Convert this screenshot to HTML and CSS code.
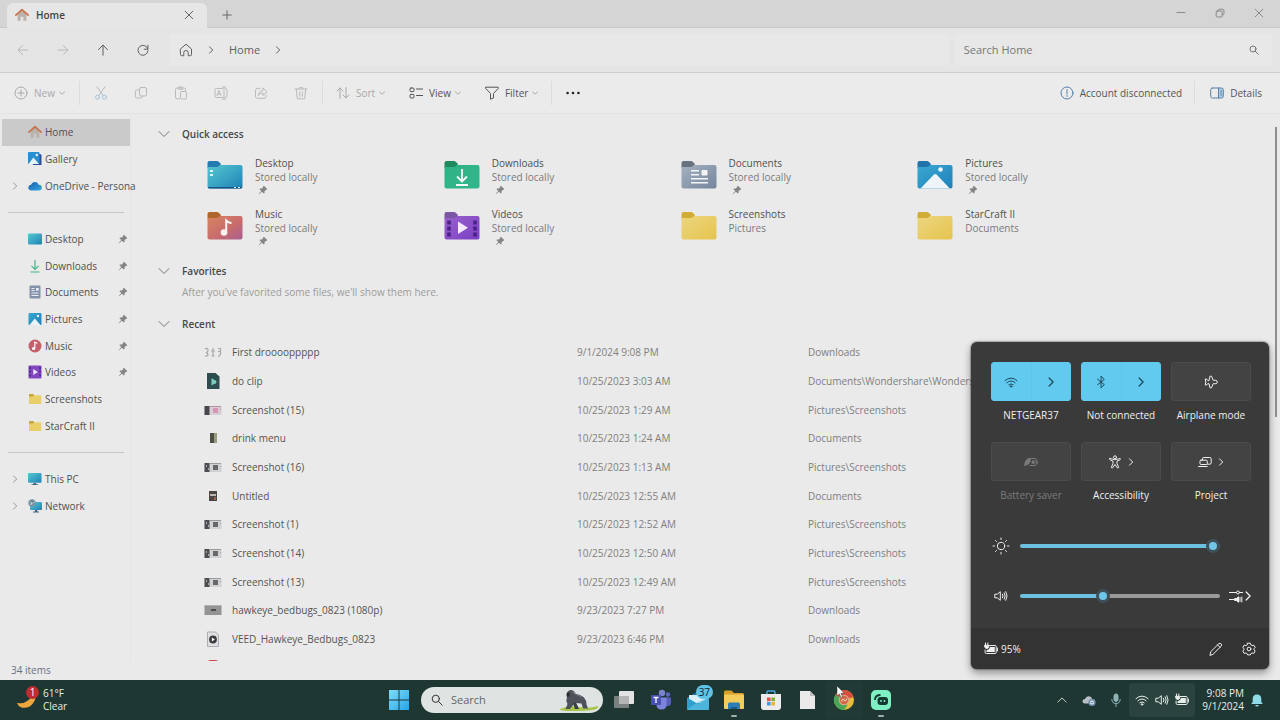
FILE: index.html
```html
<!DOCTYPE html>
<html lang="en">
<head>
<meta charset="utf-8">
<meta name="viewport" content="width=device-width, initial-scale=1">
<title>Home - File Explorer</title>
<link rel="stylesheet" href="styles.css">
</head>
<body>
<svg class="sprite" aria-hidden="true">
  <defs>
    <linearGradient id="g-desk" x1="0" y1="0" x2="1" y2="1"><stop offset="0" stop-color="#57c6cf"/><stop offset=".5" stop-color="#3aa6c4"/><stop offset="1" stop-color="#1f7fb5"/></linearGradient>
    <linearGradient id="g-down" x1="0" y1="0" x2="1" y2="1"><stop offset="0" stop-color="#2fb385"/><stop offset="1" stop-color="#31b58c"/></linearGradient>
    <linearGradient id="g-docs" x1="0" y1="0" x2="1" y2="1"><stop offset="0" stop-color="#a5b2c2"/><stop offset="1" stop-color="#74859b"/></linearGradient>
    <linearGradient id="g-pics" x1="0" y1="0" x2="1" y2="1"><stop offset="0" stop-color="#3aa9d2"/><stop offset="1" stop-color="#1f7fba"/></linearGradient>
    <linearGradient id="g-music" x1="0" y1="0" x2="1" y2="1"><stop offset="0" stop-color="#d88560"/><stop offset=".6" stop-color="#c76a6d"/><stop offset="1" stop-color="#a95f92"/></linearGradient>
    <linearGradient id="g-video" x1="0" y1="0" x2="1" y2="1"><stop offset="0" stop-color="#9a62cc"/><stop offset="1" stop-color="#7b3fc4"/></linearGradient>
    <linearGradient id="g-fold" x1="0" y1="0" x2="1" y2="1"><stop offset="0" stop-color="#ecd57f"/><stop offset="1" stop-color="#e5c44e"/></linearGradient>
    <linearGradient id="g-win" x1="0" y1="0" x2="1" y2="1"><stop offset="0" stop-color="#7fdcf8"/><stop offset="1" stop-color="#26a5e6"/></linearGradient>
    <linearGradient id="g-cloud" x1="0" y1="0" x2="1" y2="1"><stop offset="0" stop-color="#1660ac"/><stop offset="1" stop-color="#35a4e4"/></linearGradient>
  </defs>
  <symbol id="house" viewBox="0 0 16 16"><path d="M3 7v7.5h3.4V10h3.2v4.5H13V7L8 3z" fill="#b9b2ad"/><path d="M1 8.2 8 2l7 6.2" fill="none" stroke="#c9744f" stroke-width="2" stroke-linecap="round" stroke-linejoin="round"/></symbol>
  <symbol id="close" viewBox="0 0 10 10"><path d="m1.2 1.2 7.6 7.6m0-7.6L1.2 8.8"/></symbol>
  <symbol id="plus" viewBox="0 0 10 10"><path d="M5 .8v8.4M.8 5h8.4"/></symbol>
  <symbol id="minimize" viewBox="0 0 10 10"><path d="M1 4.500h8"/></symbol>
  <symbol id="restore" viewBox="0 0 10 10"><rect x="1.2" y="3" width="6" height="6" rx="1"/><path d="M3 2.600q0-1.400 1.400-1.400H7.200Q9 1.200 9 3v2.600q0 1.400-1.400 1.400"/></symbol>
  <symbol id="left" viewBox="0 0 12 12"><path d="M11 6H1.200M5.500 1.500 1 6l4.500 4.500"/></symbol>
  <symbol id="right" viewBox="0 0 12 12"><path d="M1 6h9.800M6.500 1.500 11 6l-4.500 4.500"/></symbol>
  <symbol id="up" viewBox="0 0 12 12"><path d="M6 11.200V1.200M1.500 5.700 6 1l4.500 4.700"/></symbol>
  <symbol id="refresh" viewBox="0 0 12 12"><path d="M10.900 5.200A5 5 0 1 0 11 6.800M10.900 1.200v4H7.200"/></symbol>
  <symbol id="home-line" viewBox="0 0 14 14"><path d="M1.500 6 7 1.200 12.500 6v5.700q0 1-1 1H9.200V9.500Q9.200 7.500 7 7.500T4.800 9.500v3.200H2.500q-1 0-1-1z"/></symbol>
  <symbol id="chev-r" viewBox="0 0 8 8"><path d="M2.500.8 5.700 4 2.500 7.200"/></symbol>
  <symbol id="chev-d" viewBox="0 0 8 8"><path d="M1.500 3 4 5.200l2.500-2.200"/></symbol>
  <symbol id="chev-wide" viewBox="0 0 12 12"><path d="M1 3.500 6 8.500l5-5"/></symbol>
  <symbol id="search" viewBox="0 0 12 12"><circle cx="4.800" cy="4.800" r="3.600"/><path d="m7.500 7.500 3.700 3.700"/></symbol>
  <symbol id="add-circle" viewBox="0 0 14 14"><circle cx="7" cy="7" r="6"/><path d="M7 4v6M4 7h6"/></symbol>
  <symbol id="cut" viewBox="0 0 14 14"><path d="M3 .8 9.300 9.700M11 .8 4.700 9.700"/><g stroke="#a3c3dc"><circle cx="3.500" cy="11.200" r="2"/><circle cx="10.500" cy="11.200" r="2"/></g></symbol>
  <symbol id="copy" viewBox="0 0 14 14"><rect x="5.500" y="1.500" width="7" height="8.500" rx="1.500"/><path d="M5.300 4H2.800Q1.300 4 1.300 5.500v5Q1.300 12 2.800 12h4Q8.300 12 8.500 10.200"/></symbol>
  <symbol id="paste" viewBox="0 0 14 14"><path d="M5.500 12.700H3q-1.500 0-1.500-1.500V3.500Q1.500 2 3 2h7q1.500 0 1.500 1.500V5"/><rect x="4.300" y="1" width="4.500" height="2.400" rx="1"/><rect x="6.500" y="5.500" width="6" height="7.500" rx="1.300"/></symbol>
  <symbol id="rename" viewBox="0 0 14 14"><path d="M8.500 2.500H2.500Q1 2.500 1 4v6q0 1.500 1.500 1.500h6M11.500 2.500q1.500 0 1.500 1.500v6q0 1.500-1.500 1.500M10 1v12M8.500 1h3M8.500 13h3M3 9.500 5 4.500l2 5M3.700 8h2.600"/></symbol>
  <symbol id="share" viewBox="0 0 14 14"><path d="M6 2.300H3.500Q1.500 2.300 1.500 4.300v6q0 2 2 2h6.500q2 0 2-2V9.500"/><path d="M4.500 9Q5 4.800 9 4.600V2l4 3.800-4 3.800V7Q6 6.800 4.500 9z"/></symbol>
  <symbol id="trash" viewBox="0 0 14 14"><path d="M1 3h12M5 2.800Q5 1.200 7 1.200T9 2.800M2.300 3l1 9.800h7.400l1-9.800M5.700 5.800v4.500M8.300 5.800v4.500"/></symbol>
  <symbol id="sort" viewBox="0 0 14 14"><path d="M4 12.500V2M1 5l3-3 3 3M10 1.500V12M7 9l3 3 3-3"/></symbol>
  <symbol id="view" viewBox="0 0 14 14"><rect x="1" y="2" width="4" height="3.600" rx="1"/><rect x="1" y="8.400" width="4" height="3.600" rx="1"/><path d="M7.500 3H14M7.500 9.500H14"/></symbol>
  <symbol id="filter" viewBox="0 0 14 14"><path d="M.8 1.200h12.400v1.300L8.500 7.500V12l-3 1.200V7.500L.8 2.500z"/></symbol>
  <symbol id="dots" viewBox="0 0 14 14"><g fill="#222" stroke="none"><circle cx="1.600" cy="7" r="1.300"/><circle cx="7" cy="7" r="1.300"/><circle cx="12.400" cy="7" r="1.300"/></g></symbol>
  <symbol id="info" viewBox="0 0 14 14"><circle cx="7" cy="7" r="6"/><path d="M7 3.700v4M7 9.200v1.200"/></symbol>
  <symbol id="details" viewBox="0 0 14 14"><path d="M8.500 2h3q1.800 0 1.800 1.800v6.400q0 1.800-1.800 1.800h-3z" fill="#b3cde6" stroke="none"/><rect x=".7" y="2" width="12.600" height="10" rx="1.800"/><path d="M8.500 2v10M10.500 5h1M10.500 7h1M10.500 9h1"/></symbol>
  <symbol id="pin" viewBox="0 0 10 10"><path d="M5.900.8 9.200 4.100 8.400 4.900 7.800 4.900 6.600 6.200 6.500 8.100 5.800 8.500 3.900 6.700 1 9.300.7 9 3.300 6.100 1.500 4.200 1.900 3.500 3.800 3.400 5.100 2.200 5.100 1.600z" fill="#858585"/></symbol>

  <symbol id="s-gallery" viewBox="0 0 14 14"><path d="M3 2h9q1.500 0 1.500 1.500V13H5z" fill="#2a4f96"/><rect x="0" y="0" width="11.500" height="12" rx="1" fill="#2a8fcf"/><path d="M.6 12 5.300 5.500 11 12z" fill="#e6f1f8"/><circle cx="8.800" cy="3" r="1.200" fill="#e6f1f8"/></symbol>
  <symbol id="s-onedrive" viewBox="0 0 14 14"><path d="M3.300 11.500Q.3 11.300.3 8.600 .4 6 3 5.800 4.200 2.800 7.200 2.900q2.600.1 3.500 2.900Q13.700 6 13.800 8.700q-.1 2.700-3 2.800z" fill="url(#g-cloud)"/></symbol>
  <symbol id="s-desktop" viewBox="0 0 14 14"><rect y="1.500" width="14" height="11" rx="1" fill="url(#g-desk)"/></symbol>
  <symbol id="s-download" viewBox="0 0 14 14"><path d="M7 1v9M3.500 6.800 7 10.300l3.500-3.500M2.500 13h9" fill="none" stroke="#43b487" stroke-width="1.200"/></symbol>
  <symbol id="s-document" viewBox="0 0 14 14"><rect x="1.500" y=".5" width="11" height="13" rx="1" fill="#8492ac"/><path d="M3.500 3.500h3M3.500 5.500h3M3.500 8h7M3.500 10.500h7" stroke="#e9edf3"/><rect x="8" y="3" width="2.700" height="2.700" fill="#e9edf3"/></symbol>
  <symbol id="s-picture" viewBox="0 0 14 14"><rect x=".5" y="1" width="13" height="12" rx="1" fill="url(#g-pics)"/><path d="M1.500 13 6.800 6.500 12.500 13z" fill="#eaf3f8"/><circle cx="10" cy="4" r="1.200" fill="#eaf3f8"/></symbol>
  <symbol id="s-music" viewBox="0 0 14 14"><circle cx="7" cy="7" r="6.500" fill="#c4606a"/><path d="M6.800 9.500V3.200L9.500 4.200" fill="none" stroke="#fff" stroke-width="1.200"/><circle cx="5.600" cy="9.500" r="1.600" fill="#fff"/></symbol>
  <symbol id="s-video" viewBox="0 0 14 14"><rect x=".5" y=".5" width="13" height="13" rx="1" fill="#8147bf"/><path d="M2 2v10M12 2v10" stroke="#4a2380" stroke-width="1.500" stroke-dasharray="2 1.600"/><path d="m5.300 4 4.500 3-4.500 3z" fill="#f0e6f8"/></symbol>
  <symbol id="s-folder" viewBox="0 0 14 14"><path d="M1 3q0-1 1-1h3l1.200 1.200H12.500q.8 0 .8.800V12H1z" fill="#e8cf6a"/><path d="M1 3q0-1 1-1h3l1.200 1.200L5 4.400H1z" fill="#c4a43b"/></symbol>
  <symbol id="s-pc" viewBox="0 0 14 14"><rect y="1" width="13.500" height="9.800" rx="1" fill="url(#g-desk)"/><path d="M5.500 11h2.600v1.200H10V13H3.500v-.8h2z" fill="#42617a"/></symbol>
  <symbol id="s-network" viewBox="0 0 14 14"><rect x="2" y="3" width="12" height="8" rx="1" fill="url(#g-desk)"/><path d="M7 11h2.200v1.500H11V13.500H5v-1h2z" fill="#42617a"/><circle cx="4" cy="4" r="3.700" fill="#7895a6"/><path d="M2 2.500 4 4l2.500-1M2.500 6 4 4" stroke="#d5e5ec" stroke-width=".9"/></symbol>

  <symbol id="f-desktop" viewBox="0 0 36 30"><path d="M.5 3q0-2 2-2H10q1 0 2 1l2 2-2 4H.5z" fill="#2479ae"/><path d="M.5 7h9q1.500 0 2.500-1l1-1h20.500q2 0 2 2v19.500q0 2-2 2h-31q-2 0-2-2z" fill="url(#g-desk)"/><path d="M.8 27h34.600q-.5 1.500-2 1.500h-31q-1.400 0-1.600-1.500z" fill="#175384"/><path d="M3 10h3v2H3zM3 14h3v2H3zM27 27h2v1h-2zM31 27h2v1h-2z" fill="#d7f4f8"/></symbol>
  <symbol id="f-download" viewBox="0 0 36 30"><path d="M.5 3q0-2 2-2H10q1 0 2 1l2 2-2 4H.5z" fill="#1f8a60"/><path d="M.5 7h9q1.500 0 2.500-1l1-1h20.500q2 0 2 2v19.500q0 2-2 2h-31q-2 0-2-2z" fill="url(#g-down)"/><path d="M18 9v12M13 16.500l5 5 5-5M12 25h12" fill="none" stroke="#f4fbf8" stroke-width="1.800"/></symbol>
  <symbol id="f-document" viewBox="0 0 36 30"><path d="M.5 3q0-2 2-2H10q1 0 2 1l2 2-2 4H.5z" fill="#66737f"/><path d="M.5 7h9q1.500 0 2.500-1l1-1h20.500q2 0 2 2v19.500q0 2-2 2h-31q-2 0-2-2z" fill="url(#g-docs)"/><path d="M10 10.700h8M10 14.700h8M10 18.800h17M10 22.800h17" stroke="#f3f5f7" stroke-width="1.500"/><rect x="20.500" y="10" width="6" height="5.500" rx="1" fill="#f3f5f7"/></symbol>
  <symbol id="f-picture" viewBox="0 0 36 30"><path d="M.5 3q0-2 2-2H10q1 0 2 1l2 2-2 4H.5z" fill="#2272ac"/><path d="M.5 7h9q1.500 0 2.500-1l1-1h20.500q2 0 2 2v19.500q0 2-2 2h-31q-2 0-2-2z" fill="url(#g-pics)"/><path d="M3.500 28.500 17 14.500q1.300-1.200 2.600 0l13.200 14z" fill="#eef4f9"/><circle cx="23.500" cy="9.500" r="2.300" fill="#eef4f9"/></symbol>
  <symbol id="f-music" viewBox="0 0 36 30"><path d="M.5 3q0-2 2-2H10q1 0 2 1l2 2-2 4H.5z" fill="#b0672d"/><path d="M.5 7h9q1.500 0 2.500-1l1-1h20.500q2 0 2 2v19.500q0 2-2 2h-31q-2 0-2-2z" fill="url(#g-music)"/><path d="M19.200 22V9.500q2.500 2.800 5.300 2.300" fill="none" stroke="#fbf3f1" stroke-width="2"/><circle cx="17" cy="21.500" r="3.300" fill="#fbf3f1"/></symbol>
  <symbol id="f-video" viewBox="0 0 36 30"><path d="M.5 3q0-2 2-2H10q1 0 2 1l2 2-2 4H.5z" fill="#7b57a3"/><path d="M.5 7h9q1.500 0 2.500-1l1-1h20.500q2 0 2 2v19.500q0 2-2 2h-31q-2 0-2-2z" fill="url(#g-video)"/><path d="M5 9.500v18M31 9.500v18" stroke="#4b2188" stroke-width="3.600" stroke-dasharray="4 2"/><path d="M14 10.500v12.500l10-6.200z" fill="#f3e9fb"/></symbol>
  <symbol id="f-plain" viewBox="0 0 36 30"><path d="M.5 3q0-2 2-2H10q1 0 2 1l2 2-2 4H.5z" fill="#d2ad36"/><path d="M.5 7h9q1.500 0 2.500-1l1-1h20.500q2 0 2 2v19.500q0 2-2 2h-31q-2 0-2-2z" fill="url(#g-fold)"/></symbol>

  <symbol id="t-drops" viewBox="0 0 18 16"><g fill="none" stroke="#a6a6a6" stroke-width="1.200"><path d="M1 5q3-1.500 3 1T2 8.500q2 1 2 2.500t-3 1M14 4.500h2.500M14 7.500q3-1 2.500 2T14 12M16.500 4.500v4"/><path d="M9 4v8M7 7h4M7.500 12h3"/></g></symbol>
  <symbol id="t-clip" viewBox="0 0 18 16"><path d="M3 0h8.500L15.500 3.500V16H3z" fill="#2f4d50"/><path d="M7.500 5.500q2-.5 2.500 1.500 2.500 0 2.500 2t-2.500 2L7.500 12.500z" fill="#7fcdbf"/></symbol>
  <symbol id="t-shot-pink" viewBox="0 0 18 16"><rect x=".5" y="4" width="17" height="9" fill="#d5d0d5"/><rect x=".5" y="4" width="5" height="9" fill="#4a464d"/><rect x="9" y="6" width="5" height="5" fill="#d995b5"/><path d="M6 4h11v1H6zM16 7h1v1h-1z" fill="#b58fa0"/></symbol>
  <symbol id="t-menu" viewBox="0 0 18 16"><rect x="6" y="3" width="7" height="10" fill="#9a9a80"/><rect x="6" y="3" width="4" height="10" fill="#4e5046"/></symbol>
  <symbol id="t-shot" viewBox="0 0 18 16"><rect x=".5" y="4" width="17" height="9" fill="#d0d2d4"/><rect x=".5" y="4" width="5" height="9" fill="#4c4e51"/><rect x="9" y="6" width="5" height="5" fill="#66686b"/><path d="M6 4h11v1H6zM16 7h1v1h-1z" fill="#9a9ca0"/><path d="M2 6h1v2H2zM4 9h1v2H4z" fill="#aaa"/></symbol>
  <symbol id="t-untitled" viewBox="0 0 18 16"><rect x="5" y="3" width="8" height="10" fill="#4d4544"/><rect x="6" y="6" width="6" height="2" fill="#bdb5b0"/><rect x="10" y="9" width="2" height="3" fill="#a2604a"/></symbol>
  <symbol id="t-hawk" viewBox="0 0 18 16"><rect x=".5" y="3" width="17" height="10" fill="#949494"/><rect x="7" y="7" width="5" height="2" fill="#4d4d4d"/><path d="M.5 3.500h17" stroke="#b3b3b3"/></symbol>
  <symbol id="t-media" viewBox="0 0 18 16"><path d="M3.500 1h8L14.500 4v11.500h-11z" fill="#e0e0e2" stroke="#adadb3"/><circle cx="9" cy="8.500" r="3.900" fill="#3b3b40"/><path d="m7.900 6.500 3 2-3 2z" fill="#fff"/></symbol>
  <symbol id="t-red" viewBox="0 0 18 16"><rect x="3" width="12" height="16" rx="4" fill="#d0454c"/></symbol>

  <symbol id="wifi" viewBox="0 0 14 14"><path d="M1 5.600q6-5.200 12 0M2.900 7.700q4.100-3.600 8.200 0M4.800 9.700q2.200-1.800 4.400 0"/><circle cx="7" cy="11.400" r=".8"/></symbol>
  <symbol id="bluetooth" viewBox="0 0 14 14"><path d="M3.500 4.200 10.300 9.600 7 12.800V1.200l3.300 3.200L3.500 9.800"/></symbol>
  <symbol id="plane" viewBox="0 0 14 14"><path d="M5 5.300 6 1.200h1.500L9.200 5.300h2.600q1.500.3 1.500 1.700t-1.500 1.700H9.200L7.500 12.800H6L5 8.700H3.600L2.500 10H1.200l.6-3-.6-3h1.300l1.100 1.300z"/></symbol>
  <symbol id="saver" viewBox="0 0 14 14"><path d="M7 3.500h4q1.200 0 1.200 1.200v4.600q0 1.200-1.200 1.200H6M13.300 6v2.400"/><path d="M8 5.500h2.700v3.300H7.500z" fill="currentColor" stroke="none"/><path d="M.8 10.300Q.5 4.500 6 3q1.500 6.500-5.200 7.300z" fill="currentColor"/></symbol>
  <symbol id="access" viewBox="0 0 14 14"><circle cx="7" cy="2.300" r="1.500"/><path d="M1.800 3.600q-.5 1 .6 1.500L5 6v2.500L3.300 12.500q.7 1 1.500.2L7 9.500l2.200 3.200q.8.800 1.500-.2L9 8.500V6l2.600-.9q1.100-.5.600-1.500Q7 5.800 1.800 3.600z"/></symbol>
  <symbol id="project" viewBox="0 0 14 14"><path d="M4.500 5V3.800q0-1.300 1.300-1.300h6q1.400 0 1.400 1.300v4q0 1.400-1.400 1.400H9.500"/><rect x="2" y="5.200" width="7.300" height="4.300" rx="1"/><path d="M.5 11.500h8.700"/></symbol>
  <symbol id="sun" viewBox="0 0 18 18"><circle cx="9" cy="9" r="3.700"/><path d="M9 1v1.500M9 15.500V17M1 9h1.500M15.500 9H17M3.500 3.500l1 1M13.500 13.500l1 1M14.500 3.500l-1 1M4.500 13.500l-1 1"/></symbol>
  <symbol id="speaker" viewBox="0 0 14 14"><path d="M1.200 5.200h2.100l3-2.500v8.600l-3-2.500H1.200zM8.500 5.200q1.200 1.800 0 3.600M10.200 3.800q2.100 3.200 0 6.400M11.900 2.700q2.500 4.300 0 8.600" stroke-linejoin="round"/></symbol>
  <symbol id="mixer" viewBox="0 0 14 14"><path d="M0 3.500h7.300M10.600 3.500h3M0 10.500h5"/><circle cx="9" cy="3.500" r="1.500"/><path d="M6 9.500h1.500L9.500 7.700v5.600L7.500 11.500H6z" fill="currentColor"/><path d="M11 8.500v4M12.800 8v5"/></symbol>
  <symbol id="battery" viewBox="0 0 14 14"><path d="M5.500 3.500H11q1.200 0 1.200 1.200v5.600q0 1.200-1.200 1.200H2.300q-1.200 0-1.200-1.200V8M13.400 6v3"/><path d="M6 5h4.800v5H2.500V8.500L5 7z" fill="currentColor" stroke="none"/><path d="M1.500 1v2M3.800 1v2M.7 3.300h4v1.500q-.3 1.700-2 1.700t-2-1.700z" fill="currentColor"/></symbol>
  <symbol id="pencil" viewBox="0 0 14 14"><path d="m1 13 .8-3.400L9.800 1.700q1.200-1 2.300.2t.1 2.300l-8 7.900zM8.600 2.900l2.400 2.400"/></symbol>
  <symbol id="gear" viewBox="0 0 14 14"><path d="M5.600 1.200h2.800l.5 1.700 1.200.7 1.700-.5 1.400 2.400-1.200 1.200v1l1.200 1.300-1.400 2.400-1.700-.4-1.200.6-.5 1.300H5.600l-.5-1.300-1.200-.6-1.700.4L.8 9l1.200-1.300v-1L.8 5.500l1.400-2.400 1.700.5 1.200-.7z" stroke-linejoin="round"/><circle cx="7" cy="7" r="1.900"/></symbol>
  <symbol id="mic" viewBox="0 0 14 14"><rect x="5" y="1" width="4" height="7.500" rx="2" fill="#8fb4b6"/><path d="M2.800 6.500Q2.800 10.500 7 10.500t4.200-4M7 10.500V13.500"/></symbol>
  <symbol id="cloud-sync" viewBox="0 0 14 14"><path d="M3 10.500Q.3 10.300.5 7.800.8 6 3 6 4 3 7 3.200q2.500.2 3.200 2.800 2.800 0 3 2.400 0 2-2.200 2.100z" fill="#b9bfc4" stroke="none"/><circle cx="10" cy="9.500" r="3.600" fill="#6f8dab" stroke="none"/><path d="M8.300 8.800q1.700-2 3.400 0M11.700 10.300q-1.700 2-3.400 0" stroke="#fff"/></symbol>
  <symbol id="bell" viewBox="0 0 14 14"><path d="M2.700 6Q2.700 1.500 7 1.500T11.300 6v2.700L12.700 11H1.300l1.400-2.300zM5.200 12h3.600Q8.600 13.500 7 13.500T5.200 12z" fill="#8fdce8" stroke="none"/></symbol>

  <symbol id="b-win" viewBox="0 0 20 20"><path d="M0 0h9.500v9.500H0zM10.500 0H20v9.500h-9.500zM0 10.500h9.500V20H0zM10.500 10.500H20V20h-9.500z" fill="url(#g-win)"/></symbol>
  <symbol id="b-task" viewBox="0 0 22 22"><rect x="6" y="2" width="15" height="13" rx="1" fill="#e3e3e3"/><rect x="1" y="7" width="15" height="12" rx="1" fill="#858988" opacity=".9"/><rect x="6" y="7" width="10" height="8" fill="#b5b5b5"/></symbol>
  <symbol id="b-teams" viewBox="0 0 22 22"><circle cx="12" cy="4" r="3.200" fill="#7b83cf"/><circle cx="18" cy="5.500" r="2.200" fill="#5c66bd"/><path d="M15 8.500h6v5.500q0 3-3 3h-3z" fill="#5660b8"/><path d="M6.500 8.500h10v7q0 5-5 5t-5-5z" fill="#7b83dd"/><rect x="1" y="6" width="10" height="10" rx="1" fill="#4850b0"/><path d="M3.500 8.500h5M6 8.500v5.500" stroke="#fff" stroke-width="1.300"/></symbol>
  <symbol id="b-mail" viewBox="0 0 22 22"><path d="M0 9 11 2l11 7v11.500H0z" fill="#1876b4"/><path d="M2 6h18v8H2z" fill="#d9f0fa"/><path d="M0 8.500 11 15l11-6.500V20q0 1-1 1H1q-1 0-1-1z" fill="#2f9fd0"/><path d="M0 20.500 11 13 22 8.500V20q0 1-1 1H1z" fill="#62c4e4" opacity=".6"/></symbol>
  <symbol id="b-folder" viewBox="0 0 22 22"><path d="M1 3q0-1.500 1.500-1.500h6L11 4h8.500Q21 4 21 5.500V8H1z" fill="#d99f2a"/><rect x="1" y="5.500" width="20" height="14.500" rx="1" fill="#f3cd5c"/><path d="M5 20v-5q0-1.500 1.500-1.500h9Q17 13.500 17 15v5z" fill="#2a7db6"/><path d="M8 20v-2h6v2z" fill="#185a8c"/></symbol>
  <symbol id="b-store" viewBox="0 0 22 22"><path d="M7 6V3.200Q7 2 8.200 2h5.600Q15 2 15 3.200V6" fill="none" stroke="#44a7df" stroke-width="1.500"/><path d="M1 5h20v13q0 3-3 3H4q-3 0-3-3z" fill="#ececec"/><path d="M7 8.500h3.600v3.600H7z" fill="#df553e"/><path d="M11.400 8.500H15v3.600h-3.600z" fill="#7cae3f"/><path d="M7 12.900h3.600v3.600H7z" fill="#3f9bd7"/><path d="M11.400 12.900H15v3.600h-3.600z" fill="#e9b439"/></symbol>
  <symbol id="b-file" viewBox="0 0 22 22"><path d="M4 2h10l5 5v13H4z" fill="#eaeaea"/><path d="M14 2v5h5z" fill="#bcbcbc"/></symbol>
  <symbol id="b-chrome" viewBox="0 0 22 22"><circle cx="11" cy="11" r="10" fill="#e7bd3a"/><path d="M11 11 2.300 6A10 10 0 0 1 20.500 8z" fill="#d95040"/><path d="M11 11 2.300 6A10 10 0 0 0 11 21l3.500-5z" fill="#49a657"/><circle cx="11" cy="11" r="5.300" fill="#dfa98c"/><circle cx="11" cy="11" r="4.300" fill="#cf6947"/><path d="M8.500 12.500q1-4 2.500-1.500t2.700-1.500" stroke="#f3d9cb" fill="none"/></symbol>
  <symbol id="b-cam" viewBox="0 0 22 22"><rect x="1" y="1" width="20" height="20" rx="5" fill="#7ff0c4"/><path d="M5 11Q5 6 10.500 6" stroke="#163832" stroke-width="1.800" fill="none"/><rect x="7.500" y="8" width="10.500" height="8" rx="3" fill="#163832"/><path d="M11 11v2M14.500 11v2" stroke="#7ff0c4" stroke-width="1.400"/></symbol>
  <symbol id="b-moon" viewBox="0 0 22 22"><path d="M18.500 3Q21 10 16.500 15T5.500 18.500Q2 17.200.8 13.800 7 15.500 12 11.500T18.500 3z" fill="#eda63e"/></symbol>
  <symbol id="gorilla" viewBox="0 0 40 24"><path d="M1 21q9-4 19-2t19-1q1 3-6 4t-20 1-12-2z" fill="#a7c64a"/><path d="M8 4.500Q10.500 1 14 2.500q2 1 2.300 3.500Q22 6.500 25 9.500q3 3.500 2.500 7l1.500 4h-5l-1.500-5-5.500-.5-2.500 1.500L11 21H6.500l2-5Q6.500 12.500 8 9z" fill="#4e525b"/><path d="M17 14.500 20 21h-4l-2-5.500z" fill="#3a3d45"/><path d="M7.500 5.500Q9 4 11 5.500l-.5 3-2.800.3z" fill="#2c2e34"/><path d="M13 4q5 3 10 5" stroke="#777c87" fill="none"/></symbol>
</svg>

<div class="screen">
  <main class="explorer">
    <header class="titlebar">
      <div class="tab">
        <svg class="i14"><use href="#house"/></svg>
        <span class="tab-name">Home</span>
        <button class="bare" aria-label="Close tab"><svg class="line i10"><use href="#close"/></svg></button>
      </div>
      <button class="bare new-tab" aria-label="New tab"><svg class="line i10"><use href="#plus"/></svg></button>
      <div class="window-buttons">
        <button class="bare" aria-label="Minimize"><svg class="line i10"><use href="#minimize"/></svg></button>
        <button class="bare" aria-label="Restore"><svg class="line i10"><use href="#restore"/></svg></button>
        <button class="bare" aria-label="Close"><svg class="line i10"><use href="#close"/></svg></button>
      </div>
    </header>

    <nav class="navbar" aria-label="Navigation">
      <div class="nav-buttons">
        <button class="bare" aria-label="Back" disabled><svg class="line i12"><use href="#left"/></svg></button>
        <button class="bare" aria-label="Forward" disabled><svg class="line i12"><use href="#right"/></svg></button>
        <button class="bare" aria-label="Up"><svg class="line i12"><use href="#up"/></svg></button>
        <button class="bare" aria-label="Refresh"><svg class="line i12"><use href="#refresh"/></svg></button>
      </div>
      <div class="address">
        <svg class="line i14"><use href="#home-line"/></svg>
        <svg class="line i8"><use href="#chev-r"/></svg>
        <a class="crumb" href="#">Home</a>
        <svg class="line i8"><use href="#chev-r"/></svg>
      </div>
      <label class="find">
        <input type="search" placeholder="Search Home" aria-label="Search Home">
        <svg class="line i10"><use href="#search"/></svg>
      </label>
    </nav>

    <div class="toolbar" role="toolbar">
      <button class="tool first" disabled><svg class="line i14"><use href="#add-circle"/></svg>New<svg class="line i8"><use href="#chev-d"/></svg></button>
      <span class="rule"></span>
      <button class="tool square" aria-label="Cut" disabled><svg class="line i14"><use href="#cut"/></svg></button>
      <button class="tool square" aria-label="Copy" disabled><svg class="line i14"><use href="#copy"/></svg></button>
      <button class="tool square" aria-label="Paste" disabled><svg class="line i14"><use href="#paste"/></svg></button>
      <button class="tool square" aria-label="Rename" disabled><svg class="line i14"><use href="#rename"/></svg></button>
      <button class="tool square" aria-label="Share" disabled><svg class="line i14"><use href="#share"/></svg></button>
      <button class="tool square" aria-label="Delete" disabled><svg class="line i14"><use href="#trash"/></svg></button>
      <span class="rule"></span>
      <button class="tool" disabled><svg class="line i14"><use href="#sort"/></svg>Sort<svg class="line i8"><use href="#chev-d"/></svg></button>
      <button class="tool"><svg class="line i14"><use href="#view"/></svg>View<svg class="line i8"><use href="#chev-d"/></svg></button>
      <button class="tool"><svg class="line i14"><use href="#filter"/></svg>Filter<svg class="line i8"><use href="#chev-d"/></svg></button>
      <span class="rule"></span>
      <button class="tool square" aria-label="See more"><svg class="i14"><use href="#dots"/></svg></button>
      <button class="tool account"><svg class="line i14 blue"><use href="#info"/></svg>Account disconnected</button>
      <span class="rule"></span>
      <button class="tool details"><svg class="line i14 blue"><use href="#details"/></svg>Details</button>
    </div>

    <div class="body">
      <aside class="sidebar">
        <ul class="tree">
          <li class="node selected"><svg class="i14"><use href="#house"/></svg><a href="#">Home</a></li>
          <li class="node"><svg class="i14"><use href="#s-gallery"/></svg><a href="#">Gallery</a></li>
          <li class="node"><svg class="line i8 twist"><use href="#chev-r"/></svg><svg class="i14"><use href="#s-onedrive"/></svg><a href="#">OneDrive - Persona</a></li>
          <li class="split"></li>
          <li class="node"><svg class="i14"><use href="#s-desktop"/></svg><a href="#">Desktop</a><svg class="i10"><use href="#pin"/></svg></li>
          <li class="node"><svg class="i14"><use href="#s-download"/></svg><a href="#">Downloads</a><svg class="i10"><use href="#pin"/></svg></li>
          <li class="node"><svg class="i14"><use href="#s-document"/></svg><a href="#">Documents</a><svg class="i10"><use href="#pin"/></svg></li>
          <li class="node"><svg class="i14"><use href="#s-picture"/></svg><a href="#">Pictures</a><svg class="i10"><use href="#pin"/></svg></li>
          <li class="node"><svg class="i14"><use href="#s-music"/></svg><a href="#">Music</a><svg class="i10"><use href="#pin"/></svg></li>
          <li class="node"><svg class="i14"><use href="#s-video"/></svg><a href="#">Videos</a><svg class="i10"><use href="#pin"/></svg></li>
          <li class="node"><svg class="i14"><use href="#s-folder"/></svg><a href="#">Screenshots</a></li>
          <li class="node"><svg class="i14"><use href="#s-folder"/></svg><a href="#">StarCraft II</a></li>
          <li class="split"></li>
          <li class="node"><svg class="line i8 twist"><use href="#chev-r"/></svg><svg class="i14"><use href="#s-pc"/></svg><a href="#">This PC</a></li>
          <li class="node"><svg class="line i8 twist"><use href="#chev-r"/></svg><svg class="i14"><use href="#s-network"/></svg><a href="#">Network</a></li>
        </ul>
      </aside>

      <section class="content">
        <h2 class="heading"><svg class="line i12"><use href="#chev-wide"/></svg>Quick access</h2>
        <div class="tiles">
          <article class="tile"><svg class="folder"><use href="#f-desktop"/></svg><div><p class="tile-name">Desktop</p><p class="tile-sub">Stored locally</p><svg class="i10 tile-pin"><use href="#pin"/></svg></div></article>
          <article class="tile"><svg class="folder"><use href="#f-download"/></svg><div><p class="tile-name">Downloads</p><p class="tile-sub">Stored locally</p><svg class="i10 tile-pin"><use href="#pin"/></svg></div></article>
          <article class="tile"><svg class="folder"><use href="#f-document"/></svg><div><p class="tile-name">Documents</p><p class="tile-sub">Stored locally</p><svg class="i10 tile-pin"><use href="#pin"/></svg></div></article>
          <article class="tile"><svg class="folder"><use href="#f-picture"/></svg><div><p class="tile-name">Pictures</p><p class="tile-sub">Stored locally</p><svg class="i10 tile-pin"><use href="#pin"/></svg></div></article>
          <article class="tile"><svg class="folder"><use href="#f-music"/></svg><div><p class="tile-name">Music</p><p class="tile-sub">Stored locally</p><svg class="i10 tile-pin"><use href="#pin"/></svg></div></article>
          <article class="tile"><svg class="folder"><use href="#f-video"/></svg><div><p class="tile-name">Videos</p><p class="tile-sub">Stored locally</p><svg class="i10 tile-pin"><use href="#pin"/></svg></div></article>
          <article class="tile"><svg class="folder"><use href="#f-plain"/></svg><div><p class="tile-name">Screenshots</p><p class="tile-sub">Pictures</p></div></article>
          <article class="tile"><svg class="folder"><use href="#f-plain"/></svg><div><p class="tile-name">StarCraft II</p><p class="tile-sub">Documents</p></div></article>
        </div>
        <h2 class="heading"><svg class="line i12"><use href="#chev-wide"/></svg>Favorites</h2>
        <p class="empty">After you've favorited some files, we'll show them here.</p>
        <h2 class="heading"><svg class="line i12"><use href="#chev-wide"/></svg>Recent</h2>
        <table class="recent">
          <tbody>
            <tr><td class="thumb"><svg><use href="#t-drops"/></svg></td><td class="name">First drooooppppp</td><td class="date">9/1/2024 9:08 PM</td><td>Downloads</td></tr>
            <tr><td class="thumb"><svg><use href="#t-clip"/></svg></td><td class="name">do clip</td><td class="date">10/25/2023 3:03 AM</td><td>Documents\Wondershare\Wondershare</td></tr>
            <tr><td class="thumb"><svg><use href="#t-shot-pink"/></svg></td><td class="name">Screenshot (15)</td><td class="date">10/25/2023 1:29 AM</td><td>Pictures\Screenshots</td></tr>
            <tr><td class="thumb"><svg><use href="#t-menu"/></svg></td><td class="name">drink menu</td><td class="date">10/25/2023 1:24 AM</td><td>Documents</td></tr>
            <tr><td class="thumb"><svg><use href="#t-shot"/></svg></td><td class="name">Screenshot (16)</td><td class="date">10/25/2023 1:13 AM</td><td>Pictures\Screenshots</td></tr>
            <tr><td class="thumb"><svg><use href="#t-untitled"/></svg></td><td class="name">Untitled</td><td class="date">10/25/2023 12:55 AM</td><td>Documents</td></tr>
            <tr><td class="thumb"><svg><use href="#t-shot"/></svg></td><td class="name">Screenshot (1)</td><td class="date">10/25/2023 12:52 AM</td><td>Pictures\Screenshots</td></tr>
            <tr><td class="thumb"><svg><use href="#t-shot"/></svg></td><td class="name">Screenshot (14)</td><td class="date">10/25/2023 12:50 AM</td><td>Pictures\Screenshots</td></tr>
            <tr><td class="thumb"><svg><use href="#t-shot"/></svg></td><td class="name">Screenshot (13)</td><td class="date">10/25/2023 12:49 AM</td><td>Pictures\Screenshots</td></tr>
            <tr><td class="thumb"><svg><use href="#t-hawk"/></svg></td><td class="name">hawkeye_bedbugs_0823 (1080p)</td><td class="date">9/23/2023 7:27 PM</td><td>Downloads</td></tr>
            <tr><td class="thumb"><svg><use href="#t-media"/></svg></td><td class="name">VEED_Hawkeye_Bedbugs_0823</td><td class="date">9/23/2023 6:46 PM</td><td>Downloads</td></tr>
            <tr><td class="thumb"><svg><use href="#t-red"/></svg></td><td class="name"></td><td class="date"></td><td></td></tr>
          </tbody>
        </table>
        <span class="scrollbar"></span>
      </section>
    </div>

    <footer class="status">34 items</footer>
  </main>

  <section class="flyout" aria-label="Quick settings">
    <div class="toggles">
      <div class="toggle"><div class="pad on"><button aria-label="Wi-Fi"><svg class="line i14"><use href="#wifi"/></svg></button><button aria-label="Networks"><svg class="line i10"><use href="#chev-r"/></svg></button></div><span>NETGEAR37</span></div>
      <div class="toggle"><div class="pad on"><button aria-label="Bluetooth"><svg class="line i14"><use href="#bluetooth"/></svg></button><button aria-label="Devices"><svg class="line i10"><use href="#chev-r"/></svg></button></div><span>Not connected</span></div>
      <div class="toggle"><div class="pad"><button aria-label="Airplane mode"><svg class="line i14"><use href="#plane"/></svg></button></div><span>Airplane mode</span></div>
      <div class="toggle off"><div class="pad"><button aria-label="Battery saver" disabled><svg class="line i14"><use href="#saver"/></svg></button></div><span>Battery saver</span></div>
      <div class="toggle"><div class="pad"><button aria-label="Accessibility"><svg class="line i14"><use href="#access"/></svg><svg class="line i8"><use href="#chev-r"/></svg></button></div><span>Accessibility</span></div>
      <div class="toggle"><div class="pad"><button aria-label="Project"><svg class="line i14"><use href="#project"/></svg><svg class="line i8"><use href="#chev-r"/></svg></button></div><span>Project</span></div>
    </div>
    <div class="sliders">
      <div class="slider"><svg class="line i18"><use href="#sun"/></svg><input type="range" aria-label="Brightness" min="0" max="100" value="100" style="--fill:100%"></div>
      <div class="slider"><svg class="line i14"><use href="#speaker"/></svg><input type="range" aria-label="Volume" min="0" max="100" value="41" style="--fill:41%"><button class="bare output" aria-label="Sound output"><svg class="line i14"><use href="#mixer"/></svg><svg class="line i10"><use href="#chev-r"/></svg></button></div>
    </div>
    <div class="flyout-foot">
      <svg class="line i14"><use href="#battery"/></svg><span class="percent">95%</span>
      <button class="bare" aria-label="Edit"><svg class="line i14"><use href="#pencil"/></svg></button>
      <button class="bare" aria-label="Settings"><svg class="line i14"><use href="#gear"/></svg></button>
    </div>
  </section>

  <footer class="taskbar">
    <button class="bare weather"><span class="moon"><svg class="i22"><use href="#b-moon"/></svg><span class="alert">1</span></span><span class="weather-text"><span>61°F</span><span>Clear</span></span></button>
    <div class="dock">
      <button class="bare start" aria-label="Start"><svg class="i20"><use href="#b-win"/></svg></button>
      <label class="task-search"><svg class="line i12"><use href="#search"/></svg><input type="search" placeholder="Search" aria-label="Search"><svg class="gorilla"><use href="#gorilla"/></svg></label>
      <div class="apps">
        <button class="bare" aria-label="Task view"><svg class="i22"><use href="#b-task"/></svg></button>
        <button class="bare" aria-label="Teams"><svg class="i22"><use href="#b-teams"/></svg></button>
        <button class="bare" aria-label="Mail"><svg class="i22"><use href="#b-mail"/></svg><span class="count">37</span></button>
        <button class="bare running" aria-label="File Explorer"><svg class="i22"><use href="#b-folder"/></svg></button>
        <button class="bare" aria-label="Microsoft Store"><svg class="i22"><use href="#b-store"/></svg></button>
        <button class="bare" aria-label="Document"><svg class="i22"><use href="#b-file"/></svg></button>
        <button class="bare hover" aria-label="Chrome"><svg class="i22"><use href="#b-chrome"/></svg><svg class="cursor" viewBox="0 0 10 14"><path d="M1 1v10l2.400-2 1.500 3.500 1.600-.7L5 8.300h3.400z" fill="#fff" stroke="#333" stroke-width=".5"/></svg></button>
        <button class="bare running" aria-label="Camera"><svg class="i22"><use href="#b-cam"/></svg></button>
      </div>
    </div>
    <div class="tray">
      <button class="bare" aria-label="Hidden icons"><svg class="line i10 caret"><use href="#chev-wide"/></svg></button>
      <button class="bare" aria-label="OneDrive"><svg class="line i14"><use href="#cloud-sync"/></svg></button>
      <button class="bare mic" aria-label="Microphone"><svg class="line i14"><use href="#mic"/></svg></button>
      <button class="bare system" aria-label="Quick settings"><svg class="line i14"><use href="#wifi"/></svg><svg class="line i14"><use href="#speaker"/></svg><svg class="line i14"><use href="#battery"/></svg></button>
      <div class="clock"><span>9:08 PM</span><span>9/1/2024</span></div>
      <button class="bare" aria-label="Notifications"><svg class="i14"><use href="#bell"/></svg></button>
    </div>
  </footer>
</div>
</body>
</html>
```
FILE: styles.css
```css
* { box-sizing: border-box; }

body {
  margin: 0;
  font-family: "Open Sans", "Noto Sans", sans-serif;
  font-size: 10px;
  line-height: 14px;
  color: #505050;
  background: #eaeaea;
}

button, input { font: inherit; color: inherit; }
button { padding: 0; border: 0; background: none; }
a { color: inherit; text-decoration: none; }
h2, p, ul { margin: 0; padding: 0; font-size: inherit; }
svg { display: block; flex: none; }

.sprite { position: absolute; width: 0; height: 0; }
.line { fill: none; stroke: currentColor; stroke-width: 1; stroke-linecap: round; }
.i8 { width: 8px; height: 8px; }
.i10 { width: 10px; height: 10px; }
.i12 { width: 12px; height: 12px; }
.i14 { width: 14px; height: 14px; }
.i18 { width: 18px; height: 18px; }
.i20 { width: 20px; height: 20px; }
.i22 { width: 22px; height: 22px; }
.blue { color: #5780a8; }
.bare { display: flex; align-items: center; justify-content: center; }

.screen { position: relative; display: flex; flex-direction: column; height: 100vh; overflow: hidden; }
.explorer { flex: 1; min-height: 0; display: flex; flex-direction: column; }

/* Title bar */
.titlebar { display: flex; height: 28px; background: #d5d5d5; border-bottom: 1px solid #c9c9c9; color: #888; }
.tab {
  display: flex; align-items: center; gap: 7px;
  width: 200px; height: 25px; margin: 3px 0 0 7px; padding: 0 13px 1px 8px;
  border-radius: 6px 6px 0 0; background: #e6e6e6; color: #666;
}
.tab-name { flex: 1; font-weight: 600; color: #444; }
.new-tab { width: 40px; padding-top: 2px; color: #666; }
.window-buttons { display: flex; margin-left: auto; padding-right: 2px; }
.window-buttons .bare { width: 39px; height: 25px; }

/* Navigation bar */
.navbar { display: flex; align-items: center; gap: 6px; height: 45px; padding: 0 8px 0 3px; background: #e5e5e5; border-bottom: 1px solid #cfcfcf; color: #606060; }
.nav-buttons { display: flex; }
.nav-buttons .bare { width: 40px; height: 32px; }
.nav-buttons .bare:disabled { color: #b9b9b9; }
.address { flex: 1; display: flex; align-items: center; gap: 14px; height: 32px; padding-left: 10px; border-radius: 3px; background: #e8e8e8; font-size: 11px; }
.find { display: flex; align-items: center; width: 25%; height: 32px; padding: 0 13px 0 9px; border-radius: 3px; background: #e8e8e8; font-size: 11px; }
.find input, .task-search input { flex: 1; min-width: 0; padding: 0; border: 0; outline: 0; background: none; }
.find input::placeholder { color: #777; opacity: 1; }

/* Command bar */
.toolbar { display: flex; align-items: center; height: 41px; background: #ebebeb; border-bottom: 1px solid #e2e2e2; }
.tool { display: flex; align-items: center; gap: 6px; height: 32px; padding: 0 11px 0 12px; color: #555; }
.tool .i8 { margin-left: -3px; color: #aaa; }
.tool:disabled { color: #a9a9a9; }
.tool.first { padding: 0 12px 0 14px; }
.tool.square { width: 40px; padding: 0; justify-content: center; }
.tool.square:disabled { color: #bababa; }
.tool.account { margin-left: auto; }
.tool.details { padding: 0 18px 0 14px; }
.rule { width: 1px; height: 24px; margin: 0 1px; background: #dcdcdc; }

/* Body */
.body { flex: 1; min-height: 0; display: flex; }
.sidebar { width: 131px; padding: 5px 0 0 2px; border-right: 1px solid #e4e4e4; }
.tree { display: grid; grid-auto-rows: 1fr; height: 400px; list-style: none; }
.node { display: flex; align-items: center; gap: 3px; min-width: 0; padding: 0 2px 0 26px; white-space: nowrap; }
.node a { flex: 1; min-width: 0; }
.twist { margin: 0 6px 0 -17px; color: #999; }
.selected { background: #cacaca; }
.split { align-self: center; height: 1px; margin: 0 6px; background: #c8c8c8; }

.content { position: relative; flex: 1; min-width: 0; overflow: hidden; padding: 12px 0 0 27px; }
.heading { display: flex; align-items: center; gap: 12px; height: 16px; font-weight: 600; color: #484848; }
.heading .line { color: #777; }
.tiles { display: grid; grid-template-columns: repeat(4, 1fr); grid-auto-rows: 51px; margin: 14px 126px 5px 49px; }
.tile { display: flex; gap: 12px; }
.folder { width: 36px; height: 30px; margin-top: 4px; }
.tile-sub { color: #7b7b7b; }
.tile-pin { margin: 1px 0 0 3px; }
.empty { margin: 6px 0 17px 24px; color: #9c9c9c; }

.recent { width: calc(100% - 46px); height: 344px; margin: 6px 0 0 46px; border-collapse: collapse; table-layout: fixed; color: #808080; }
.recent td { padding: 0; white-space: nowrap; }
.recent .thumb { width: 28px; }
.recent .thumb svg { width: 18px; height: 16px; }
.recent .name { width: 345px; color: #545454; }
.recent .date { width: 231px; }
.scrollbar { position: absolute; top: 13px; right: 3px; width: 2px; height: 290px; background: #8f8f8f; }

.status { height: 19px; padding: 2px 11px; color: #687083; }

/* Quick settings */
.flyout {
  position: absolute; right: 11px; bottom: 51px; width: 298px;
  border-radius: 6px; overflow: hidden; background: #3a3a3a; color: #f0f0f0;
  box-shadow: 0 0 1px 1px rgba(0, 0, 0, .25), 0 4px 8px rgba(0, 0, 0, .4);
}
.toggles { display: grid; grid-template-columns: repeat(3, 80px); gap: 20px 10px; padding: 20px 0 0 20px; }
.toggle { display: flex; flex-direction: column; gap: 7px; height: 60px; text-align: center; white-space: nowrap; font-weight: 500; }
.toggle.off { color: #7a7a7a; }
.pad { display: flex; height: 40px; border-radius: 3px; border: 1px solid #4b4b4b; background: #434343; }
.pad button { flex: 1; display: flex; align-items: center; justify-content: center; gap: 5px; }
.pad.on { border-color: #62caee; background: #62caee; color: #1d4a5c; }
.pad.on button + button { border-left: 1px solid #5ec5e9; }
.sliders { display: grid; gap: 22px; padding: 30px 19px 18px 20px; }
.slider { display: grid; grid-template-columns: 20px 200px 1fr; align-items: center; column-gap: 9px; height: 28px; }
.slider > svg { justify-self: center; }
.slider input { appearance: none; width: 200px; height: 14px; margin: 0; background: none; }
.slider input::-webkit-slider-runnable-track {
  height: 4px; border-radius: 2px;
  background: linear-gradient(to right, #6bbfe0 var(--fill), #9a9a9a var(--fill));
}
.slider input::-webkit-slider-thumb {
  appearance: none; width: 14px; height: 14px; margin-top: -5px;
  border: 3px solid #3f4f57; border-radius: 50%; background: #6fc6e8;
}
.output { gap: 0; }
.flyout-foot { display: flex; align-items: center; gap: 3px; height: 41px; padding: 0 13px; background: #333; }
.percent { flex: 1; font-weight: 500; }
.flyout-foot .bare + .bare { margin-left: 16px; }

/* Taskbar */
.taskbar { display: grid; grid-template-columns: 1fr auto 1fr; align-items: center; height: 40px; background: #1e3733; color: #e8eeec; }
.weather { justify-self: start; gap: 5px; padding-left: 16px; text-align: left; }
.moon { position: relative; }
.alert { position: absolute; top: -3px; right: -1px; width: 13px; height: 13px; border-radius: 50%; background: #bf2c32; line-height: 13px; text-align: center; color: #fff; }
.weather-text, .clock { display: grid; line-height: 13px; }
.dock { display: flex; align-items: center; }
.start { width: 36px; height: 36px; margin-right: 4px; }
.task-search { display: flex; align-items: center; gap: 8px; width: 182px; height: 26px; margin-right: 3px; padding: 0 4px 0 10px; border-radius: 13px; background: #dfe3e2; color: #333; font-size: 11px; }
.task-search input::placeholder { color: #666; opacity: 1; }
.gorilla { width: 40px; height: 24px; }
.apps { display: grid; grid-template-columns: repeat(8, 1fr); width: 293px; }
.apps .bare { position: relative; height: 38px; }
.running::after { content: ""; position: absolute; bottom: 2px; left: 50%; width: 6px; height: 2px; margin-left: -3px; border-radius: 1px; background: #9fb0ac; }
.hover { border-radius: 3px; background: #213a36; }
.count { position: absolute; top: 4px; right: 3px; width: 17px; height: 14px; border-radius: 7px; background: #5ec3e6; line-height: 14px; text-align: center; color: #123; }
.cursor { position: absolute; top: 4px; left: 10px; width: 10px; height: 14px; }
.tray { justify-self: end; display: flex; align-items: center; padding-right: 16px; }
.tray > .bare { min-width: 14px; height: 34px; }
.caret { transform: rotate(180deg); }
.tray > .bare:first-child { margin-right: 13px; }
.mic { margin: 0 6px 0 13px; color: #8fb4b6; }
.system { gap: 6px; width: 66px; border-radius: 3px; background: #2a433f; }
.clock { margin: 0 6px 0 7px; text-align: right; }
```
